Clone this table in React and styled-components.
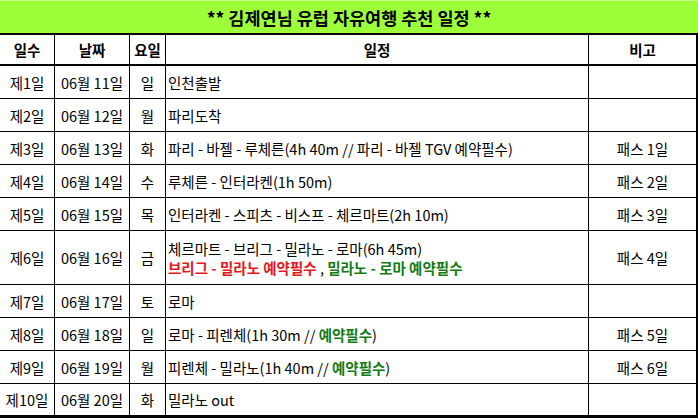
import styled, { createGlobalStyle } from 'styled-components';

const GlobalStyle = createGlobalStyle`
	html, body {
		margin: 0;
		padding: 0;
		background: #fff;
	}
	body {
		font-family: "Noto Sans CJK KR", "Noto Sans", sans-serif;
		color: #000;
	}
`;

const Sheet = styled.div`
	display: grid;
	grid-template-columns: 54px 74px 35px 422px 107px;
	grid-auto-rows: auto;
	align-content: start;
	gap: 1px;
	width: 698px;
	height: 418px;
	box-sizing: border-box;
	padding: 0 2px 2px 0;
	background-color: #000;
`;

const Title = styled.div`
	grid-column: 1 / -1;
	height: 33px;
	margin: 0 -2px 1px 0;
	box-sizing: border-box;
	border-top: 1px solid #c4ff8c;
	background-color: #9cff3a;
	display: flex;
	align-items: center;
	justify-content: center;
	font-size: 17.5px;
	font-weight: 700;
`;

const Cell = styled.div`
	background-color: #fff;
	display: flex;
	flex-direction: column;
	justify-content: center;
	align-items: ${p => (p.$left ? 'flex-start' : 'center')};
	padding-left: ${p => (p.$left ? '2px' : '0')};
	font-size: 14.5px;
	line-height: 19px;
	white-space: nowrap;
	overflow: hidden;
	height: ${p => p.$h || 32}px;
`;

const HeadCell = styled(Cell)`
	font-weight: 700;
	height: 29px;
	margin-bottom: 1px;
`;

const Red = styled.b`
	color: #e5161c;
`;

const Green = styled.b`
	color: #157a15;
`;

const rows = [
	{ n: '제1일', d: '06월 11일', w: '일', plan: '인천출발', note: '' },
	{ n: '제2일', d: '06월 12일', w: '월', plan: '파리도착', note: '' },
	{ n: '제3일', d: '06월 13일', w: '화', plan: '파리 - 바젤 - 루체른(4h 40m // 파리 - 바젤 TGV 예약필수)', note: '패스 1일' },
	{ n: '제4일', d: '06월 14일', w: '수', plan: '루체른 - 인터라켄(1h 50m)', note: '패스 2일' },
	{ n: '제5일', d: '06월 15일', w: '목', plan: '인터라켄 - 스피츠 - 비스프 - 체르마트(2h 10m)', note: '패스 3일' },
	{
		n: '제6일',
		d: '06월 16일',
		w: '금',
		h: 53,
		plan: (
			<>
				<span>체르마트 - 브리그 - 밀라노 - 로마(6h 45m)</span>
				<span>
					<Red>브리그 - 밀라노 예약필수</Red> , <Green>밀라노 - 로마 예약필수</Green>
				</span>
			</>
		),
		note: '패스 4일',
	},
	{ n: '제7일', d: '06월 17일', w: '토', plan: '로마', note: '' },
	{
		n: '제8일',
		d: '06월 18일',
		w: '일',
		plan: (
			<span>
				로마 - 피렌체(1h 30m // <Green>예약필수</Green>)
			</span>
		),
		note: '패스 5일',
	},
	{
		n: '제9일',
		d: '06월 19일',
		w: '월',
		plan: (
			<span>
				피렌체 - 밀라노(1h 40m // <Green>예약필수</Green>)
			</span>
		),
		note: '패스 6일',
	},
	{ n: '제10일', d: '06월 20일', w: '화', plan: '밀라노 out', note: '', h: 31 },
];

export default function App() {
	return (
		<>
			<GlobalStyle />
			<Sheet>
				<Title>** 김제연님 유럽 자유여행 추천 일정 **</Title>
				<HeadCell>일수</HeadCell>
				<HeadCell>날짜</HeadCell>
				<HeadCell>요일</HeadCell>
				<HeadCell>일정</HeadCell>
				<HeadCell>비고</HeadCell>
				{rows.map(r => (
					<div key={r.n} style={{ display: 'contents' }}>
						<Cell $h={r.h}>{r.n}</Cell>
						<Cell $h={r.h}>{r.d}</Cell>
						<Cell $h={r.h}>{r.w}</Cell>
						<Cell $h={r.h} $left>
							{r.plan}
						</Cell>
						<Cell $h={r.h}>{r.note}</Cell>
					</div>
				))}
			</Sheet>
		</>
	);
}
